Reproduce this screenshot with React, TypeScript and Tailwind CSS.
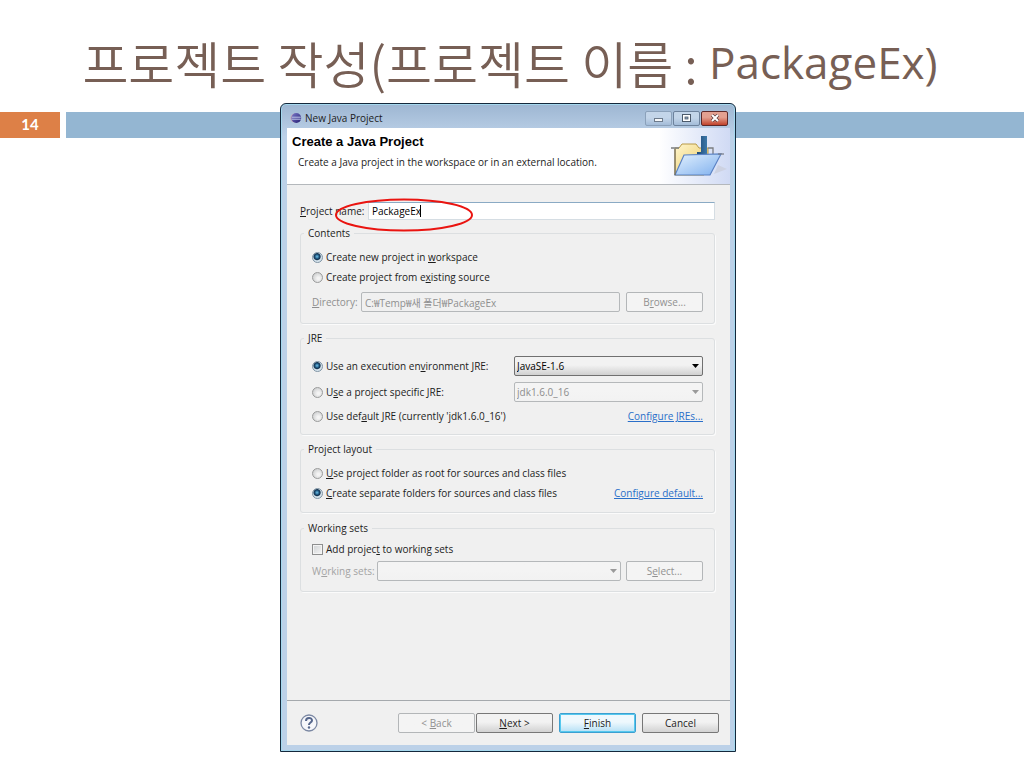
import { useState } from 'react';
import type { ReactNode } from 'react';

const radioClass =
  'h-[11px] w-[11px] shrink-0 appearance-none rounded-full border border-[#9a9b9b] bg-[radial-gradient(circle_at_60%_60%,#f4f4f4_15%,#c4c6c7_95%)] checked:border-[#7f94a5] checked:bg-[radial-gradient(circle_at_45%_40%,#6fc3ea_0%,#174a73_32%,#14324d_42%,#d5e3ec_56%)]';

function Group({ title, className, children }: { title: string; className: string; children: ReactNode }) {
  return (
    <fieldset className={`min-w-0 rounded-[3px] border border-[#dcdfe1] px-[11px] shadow-[1px_1px_0_#fbfbfb] ${className}`}>
      <legend className="-ml-2 px-1 leading-[14px]">{title}</legend>
      {children}
    </fieldset>
  );
}

function Radio({
  name,
  checked,
  onSelect,
  children,
}: {
  name: string;
  checked: boolean;
  onSelect: () => void;
  children: ReactNode;
}) {
  return (
    <label className="flex h-5 items-center gap-[3px]">
      <input type="radio" name={name} checked={checked} onChange={onSelect} className={radioClass} />
      <span>{children}</span>
    </label>
  );
}

function Combo({
  id,
  label,
  value,
  disabled,
  className,
}: {
  id?: string;
  label?: string;
  value: string;
  disabled?: boolean;
  className: string;
}) {
  return (
    <div className={`relative ${className}`}>
      <select
        id={id}
        aria-label={label}
        disabled={disabled}
        className="block h-5 w-full appearance-none rounded-[2px] border border-[#707070] bg-linear-to-b from-[#f2f2f2] from-45% to-[#d0d0d0] pl-[2px] text-black opacity-100 disabled:border-[#b5b8ba] disabled:from-[#f4f4f4] disabled:to-[#f2f2f2] disabled:text-[#8d8d8d]"
      >
        <option>{value}</option>
      </select>
      <svg viewBox="0 0 7 4" className="pointer-events-none absolute top-2 right-1 h-1 w-[7px]">
        <path d="M0 0h7L3.5 4z" fill={disabled ? '#9a9a9a' : '#000'} />
      </svg>
    </div>
  );
}

function PushButton({
  children,
  disabled,
  primary,
}: {
  children: ReactNode;
  disabled?: boolean;
  primary?: boolean;
}) {
  const look = primary
    ? 'border-[#3c9fd0] bg-linear-to-b from-[#eef8fd] from-45% to-[#b5e0f5] shadow-[inset_0_0_0_1px_#55c8ee]'
    : 'border-[#777777] bg-linear-to-b from-[#f2f2f2] from-45% to-[#d2d2d2] disabled:border-[#b3b6b8] disabled:from-[#f4f4f4] disabled:to-[#f4f4f4] disabled:text-[#919191]';
  return (
    <button type="button" disabled={disabled} className={`h-5 w-[77px] shrink-0 rounded-[2px] border ${look}`}>
      {children}
    </button>
  );
}

function EclipseIcon() {
  return (
    <svg viewBox="0 0 12 12" className="h-3 w-3">
      <defs>
        <linearGradient id="ball" x1="0" y1="0" x2="1" y2="1">
          <stop offset="0" stopColor="#7a78c8" />
          <stop offset="1" stopColor="#241c72" />
        </linearGradient>
      </defs>
      <ellipse cx="5" cy="6" rx="4.6" ry="4.6" fill="#c9a9b8" />
      <circle cx="6.3" cy="6" r="4.9" fill="url(#ball)" />
      <path d="M1.8 5.2h9M1.8 7.2h9" stroke="#c9d3f2" strokeWidth="0.9" />
    </svg>
  );
}

function FolderIcon() {
  return (
    <svg viewBox="0 0 62 56" className="h-14 w-[62px]">
      <defs>
        <linearGradient id="back" x1="0" y1="0" x2="1" y2="1">
          <stop offset="0" stopColor="#fff6cf" />
          <stop offset="1" stopColor="#e8c65a" />
        </linearGradient>
        <linearGradient id="front" x1="0" y1="0" x2="1" y2="1">
          <stop offset="0" stopColor="#e3f1fe" />
          <stop offset="1" stopColor="#7fb0ee" />
        </linearGradient>
        <linearGradient id="jay" x1="0" y1="0" x2="1" y2="0">
          <stop offset="0" stopColor="#1e4a78" />
          <stop offset="1" stopColor="#3d78a8" />
        </linearGradient>
      </defs>
      <path d="M46 46l13-5-9-4z" fill="#cdd2e2" />
      <path d="M7 47V20h4l3-4h14l3 4h9v8l-4 19z" fill="url(#back)" stroke="#b89a48" strokeWidth="1" />
      <path d="M3 20h8M40 20h5v6" fill="none" stroke="#7b7d80" strokeWidth="1.3" />
      <path d="M33 8h6v18c0 3-2 4-5 4h-5v-6h4z" fill="url(#jay)" />
      <path d="M7 47l9-20 37-1-11 21z" fill="url(#front)" stroke="#5a82c4" strokeWidth="1.2" />
      <path d="M7 21v26" stroke="#6f6a5c" strokeWidth="1.2" />
      <path d="M50 26h6" stroke="#777b84" strokeWidth="1.2" />
    </svg>
  );
}

function WindowButtons() {
  const plain =
    'flex h-[15px] w-[27px] items-center justify-center rounded-[2px] border bg-linear-to-b from-[#c3d5e9] from-45% to-[#a3bcd8]';
  return (
    <div className="flex gap-px">
      <button type="button" aria-label="Minimize" className={`${plain} border-[#8ba1ba]`}>
        <svg viewBox="0 0 11 8" className="h-2 w-[11px]">
          <rect x="1.5" y="4.5" width="8" height="3" fill="#f6f8fa" stroke="#6d7b8c" />
        </svg>
      </button>
      <button type="button" aria-label="Maximize" className={`${plain} border-[#6d829c]`}>
        <svg viewBox="0 0 11 8" className="h-2 w-[11px]">
          <rect x="1.5" y="0.5" width="8" height="7" fill="#fff" stroke="#4c5a6b" />
          <rect x="4" y="3" width="3" height="2" fill="#8ea4bd" stroke="#4c5a6b" strokeWidth="0.8" />
        </svg>
      </button>
      <button
        type="button"
        aria-label="Close"
        className="flex h-[15px] w-[27px] items-center justify-center rounded-[2px] border border-[#5e2a2a] bg-linear-to-b from-[#e3a090] from-40% to-[#c0402a]"
      >
        <svg viewBox="0 0 10 8" className="h-2 w-[10px]">
          <path d="M2 1l6 6M8 1L2 7" stroke="#5c3a3a" strokeWidth="3.4" />
          <path d="M2 1l6 6M8 1L2 7" stroke="#fff" strokeWidth="2" />
        </svg>
      </button>
    </div>
  );
}

function ProjectDialog() {
  const [name, setName] = useState('PackageEx');
  const [source, setSource] = useState('workspace');
  const [jre, setJre] = useState('environment');
  const [layout, setLayout] = useState('separate');

  return (
    <section
      aria-label="New Java Project"
      className="w-[456px] rounded-t-md border border-[#14283c] bg-linear-to-b from-[#9db6d2] to-[#bcd1e8] to-5% pr-[5px] pb-[6px] pl-[6px] font-['Open_Sans','Noto_Sans_CJK_KR',sans-serif] text-[10px] leading-[14px] text-[#1c1c1c] shadow-[inset_0_0_0_1px_#a5d8ee]"
    >
      <div className="flex h-6 items-center pt-1 pl-[3px]">
        <EclipseIcon />
        <span className="ml-[3px] flex-1">New Java Project</span>
        <div className="pr-[2px]">
          <WindowButtons />
        </div>
      </div>

      <header className="flex h-[57px] items-start justify-between border-b border-[#b4b8bc] bg-linear-to-r from-white from-84% to-[#d0daf4] pl-[5px]">
        <div className="pt-[7px]">
          <h2 className="font-['Liberation_Sans',sans-serif] text-[13px] leading-[14px] font-bold text-black">
            Create a Java Project
          </h2>
          <p className="mt-[6px] pl-[6px]">Create a Java project in the workspace or in an external location.</p>
        </div>
        <FolderIcon />
      </header>

      <form className="bg-[#f0f0f0]" onSubmit={(e) => e.preventDefault()}>
        <div className="pt-[17px] pr-[15px] pb-[108px] pl-[13px]">
          <div className="relative flex h-[18px] items-center">
            <label htmlFor="project-name" className="w-[68px]">
              <u>P</u>roject name:
            </label>
            <input
              id="project-name"
              value={name}
              onChange={(e) => setName(e.target.value)}
              className="h-[18px] min-w-0 flex-1 border border-[#d5dde3] border-t-[#8aaac4] bg-white px-[3px] text-black outline-none"
            />
            <span className="absolute left-[120px] h-3 w-px bg-black" />
            {/* 프로젝트 이름 강조 표시 */}
            <svg viewBox="0 0 140 34" className="pointer-events-none absolute -top-1 left-[34px] h-[34px] w-[140px]">
              <ellipse cx="70" cy="17" rx="68" ry="15.5" fill="none" stroke="#ea1410" strokeWidth="2" />
            </svg>
          </div>

          <Group title="Contents" className="mt-[6px] pt-[7px] pb-[11px]">
            <Radio name="source" checked={source === 'workspace'} onSelect={() => setSource('workspace')}>
              Create new project in <u>w</u>orkspace
            </Radio>
            <Radio name="source" checked={source === 'existing'} onSelect={() => setSource('existing')}>
              Create project from e<u>x</u>isting source
            </Radio>
            <div className="mt-[5px] flex items-center text-[#8f8f8f]">
              <label htmlFor="directory" className="w-[49px]">
                <u>D</u>irectory:
              </label>
              <input
                id="directory"
                disabled
                value="C:₩Temp₩새 폴더₩PackageEx"
                className="mr-[6px] h-5 min-w-0 flex-1 rounded-[2px] border border-[#b5b8ba] bg-[#f0f0f0] px-[3px]"
              />
              <PushButton disabled>
                B<u>r</u>owse...
              </PushButton>
            </div>
          </Group>

          <Group title="JRE" className="mt-[7px] pt-[11px] pb-2">
            <div className="flex items-center justify-between">
              <Radio name="jre" checked={jre === 'environment'} onSelect={() => setJre('environment')}>
                Use an execution en<u>v</u>ironment JRE:
              </Radio>
              <Combo label="Execution environment" value="JavaSE-1.6" className="w-[189px]" />
            </div>
            <div className="mt-[6px] flex items-center justify-between">
              <Radio name="jre" checked={jre === 'specific'} onSelect={() => setJre('specific')}>
                U<u>s</u>e a project specific JRE:
              </Radio>
              <Combo label="Project JRE" value="jdk1.6.0_16" disabled className="w-[189px]" />
            </div>
            <div className="mt-1 flex items-center justify-between">
              <Radio name="jre" checked={jre === 'default'} onSelect={() => setJre('default')}>
                Use def<u>a</u>ult JRE (currently 'jdk1.6.0_16')
              </Radio>
              <a href="#jres" className="text-[#2a6fc9] underline">
                Configure JREs...
              </a>
            </div>
          </Group>

          <Group title="Project layout" className="mt-[7px] pt-[7px] pb-[9px]">
            <Radio name="layout" checked={layout === 'root'} onSelect={() => setLayout('root')}>
              <u>U</u>se project folder as root for sources and class files
            </Radio>
            <div className="flex items-center justify-between">
              <Radio name="layout" checked={layout === 'separate'} onSelect={() => setLayout('separate')}>
                <u>C</u>reate separate folders for sources and class files
              </Radio>
              <a href="#default" className="text-[#2a6fc9] underline">
                Configure default...
              </a>
            </div>
          </Group>

          <Group title="Working sets" className="mt-2 pt-1 pb-[10px]">
            <label className="flex h-5 items-center gap-[3px]">
              <input
                type="checkbox"
                className="h-[11px] w-[11px] appearance-none border border-[#8e8f8f] bg-linear-to-br from-[#cfd2d4] to-[#f6f6f6] shadow-[inset_0_0_0_1px_#f4f4f4] checked:bg-[#174a73]"
              />
              <span>
                Add projec<u>t</u> to working sets
              </span>
            </label>
            <div className="mt-[2px] flex items-center text-[#a3a3a3]">
              <label htmlFor="working-sets" className="w-[65px]">
                W<u>o</u>rking sets:
              </label>
              <Combo id="working-sets" value="" disabled className="mr-[5px] flex-1" />
              <PushButton disabled>
                S<u>e</u>lect...
              </PushButton>
            </div>
          </Group>
        </div>

        <footer className="flex items-center border-t border-[#a5a9ad] pt-3 pr-[11px] pb-3 pl-[13px]">
          <button type="button" aria-label="Help">
            <svg viewBox="0 0 18 18" className="h-[18px] w-[18px]">
              <circle cx="9" cy="9" r="8" fill="#f6f7fa" stroke="#7b88a3" strokeWidth="1.3" />
              <path d="M6 7c0-4 6-4 6-.6C12 8.6 9 8.5 9 11" fill="none" stroke="#56678c" strokeWidth="2" />
              <circle cx="9" cy="13.5" r="1.2" fill="#56678c" />
            </svg>
          </button>
          <div className="ml-auto flex gap-[6px]">
            <div className="flex gap-px">
              <PushButton disabled>
                &lt; <u>B</u>ack
              </PushButton>
              <PushButton>
                <u>N</u>ext &gt;
              </PushButton>
            </div>
            <PushButton primary>
              <u>F</u>inish
            </PushButton>
            <PushButton>Cancel</PushButton>
          </div>
        </footer>
      </form>
    </section>
  );
}

export default function App() {
  return (
    <main className="min-h-screen bg-white">
      <h1 className="flex h-28 items-center justify-center pt-3 pr-1 font-['Noto_Sans_CJK_KR',sans-serif] text-[50px] leading-none font-[350] whitespace-pre text-[#775f55]">
        프로젝트 작성(프로젝트 이름 : <span className="font-['Open_Sans',sans-serif] text-[44px] font-normal">PackageEx)</span>
      </h1>
      <div className="flex h-[26px] gap-[6px]">
        <p className="w-[60px] bg-[#dd8047] text-center font-['Lato',sans-serif] text-[15px] leading-6 font-bold text-white">14</p>
        <div className="flex-1 bg-[#94b6d2]" />
      </div>
      <div className="relative -mt-[35px] flex justify-center pr-2 pb-4">
        <ProjectDialog />
      </div>
    </main>
  );
}
